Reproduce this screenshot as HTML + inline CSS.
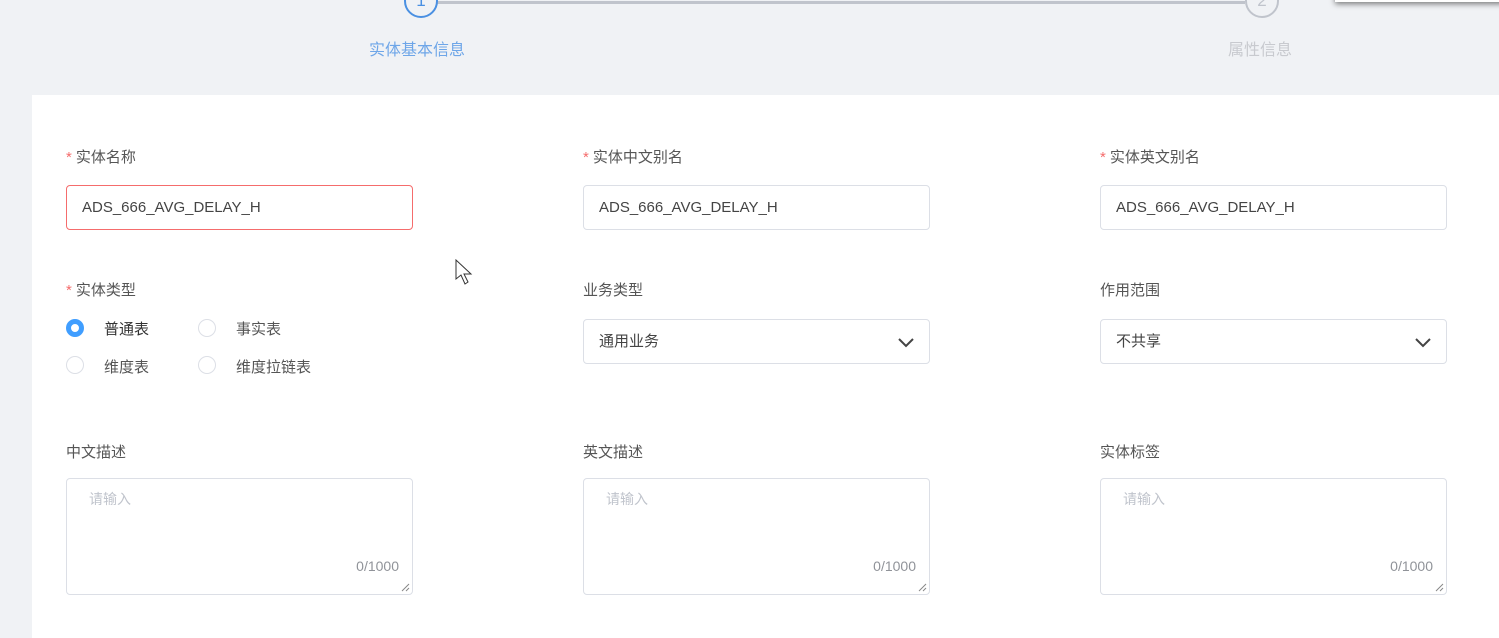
<!DOCTYPE html>
<html><head><meta charset="utf-8"><style>
*{box-sizing:border-box;margin:0;padding:0}
body{width:1499px;height:638px;overflow:hidden;background:#f0f2f5;font-family:"Liberation Sans","Noto Sans CJK SC",sans-serif;position:relative;color:#606266}
.abs{position:absolute}
.card{left:32px;top:95px;width:1467px;height:543px;background:#fff}
.lbl{font-size:15px;color:#555}
.lbl b{color:#f56c6c;font-weight:normal;margin-right:4px}
.inp{height:45px;width:347px;border:1px solid #dcdfe6;border-radius:4px;font-size:15px;color:#444;padding:0 15px;line-height:43px}
.ta{height:117px;width:347px;border:1px solid #dcdfe6;border-radius:4px;font-size:14px}
.ta .ph{position:absolute;left:22px;top:10px;color:#c0c4cc}
.ta .cnt{position:absolute;right:13px;bottom:20px;color:#909399;font-size:14px}
.ta svg{position:absolute;right:2px;bottom:2px}
.radio{width:18px;height:18px;border:1px solid #dcdfe6;border-radius:50%}
.rt{font-size:15px;color:#555}
</style></head><body>
<div class="abs" style="left:437px;top:1px;width:808px;height:3px;background:#c0c4cc"></div>
<div class="abs" style="left:404px;top:-16px;width:34px;height:34px;border:2px solid #4a90e2;border-radius:50%;background:#f0f2f5;color:#4a90e2;text-align:center;line-height:30px;font-size:17px">1</div>
<div class="abs" style="left:1245px;top:-16px;width:34px;height:34px;border:2px solid #c0c4cc;border-radius:50%;background:#f0f2f5;color:#c0c4cc;text-align:center;line-height:30px;font-size:17px">2</div>
<div class="abs" style="left:369px;top:36px;font-size:16px;color:#6ea6e8">实体基本信息</div>
<div class="abs" style="left:1228px;top:36px;font-size:16px;color:#c8cacf">属性信息</div>
<div class="abs" style="left:1335px;top:-10px;width:180px;height:12px;background:#fff;box-shadow:0 2px 6px rgba(0,0,0,.5)"></div>
<div class="abs card"></div>

<div class="abs lbl" style="left:66px;top:146px"><b>*</b>实体名称</div>
<div class="abs lbl" style="left:583px;top:146px"><b>*</b>实体中文别名</div>
<div class="abs lbl" style="left:1100px;top:146px"><b>*</b>实体英文别名</div>
<div class="abs inp" style="left:66px;top:185px;border-color:#f56c6c">ADS_666_AVG_DELAY_H</div>
<div class="abs inp" style="left:583px;top:185px">ADS_666_AVG_DELAY_H</div>
<div class="abs inp" style="left:1100px;top:185px">ADS_666_AVG_DELAY_H</div>

<div class="abs lbl" style="left:66px;top:279px"><b>*</b>实体类型</div>
<div class="abs lbl" style="left:583px;top:279px">业务类型</div>
<div class="abs lbl" style="left:1100px;top:279px">作用范围</div>

<div class="abs radio" style="left:66px;top:319px;border:5px solid #409eff;background:#fff"></div>
<div class="abs rt" style="left:104px;top:318px;color:#333">普通表</div>
<div class="abs radio" style="left:198px;top:319px"></div>
<div class="abs rt" style="left:236px;top:318px">事实表</div>
<div class="abs radio" style="left:66px;top:356px"></div>
<div class="abs rt" style="left:104px;top:356px">维度表</div>
<div class="abs radio" style="left:198px;top:356px"></div>
<div class="abs rt" style="left:236px;top:356px">维度拉链表</div>

<div class="abs inp" style="left:583px;top:319px">通用业务</div>
<div class="abs inp" style="left:1100px;top:319px">不共享</div>
<svg class="abs" style="left:897px;top:336px" width="18" height="12"><path d="M2 3 L9 10 L16 3" fill="none" stroke="#444" stroke-width="2"/></svg>
<svg class="abs" style="left:1414px;top:336px" width="18" height="12"><path d="M2 3 L9 10 L16 3" fill="none" stroke="#444" stroke-width="2"/></svg>

<div class="abs lbl" style="left:66px;top:441px">中文描述</div>
<div class="abs lbl" style="left:583px;top:441px">英文描述</div>
<div class="abs lbl" style="left:1100px;top:441px">实体标签</div>
<div class="abs ta" style="left:66px;top:478px"><span class="ph">请输入</span><span class="cnt">0/1000</span><svg width="10" height="10"><path d="M9 2L2 9M9 6L6 9" stroke="#888"/></svg></div>
<div class="abs ta" style="left:583px;top:478px"><span class="ph">请输入</span><span class="cnt">0/1000</span><svg width="10" height="10"><path d="M9 2L2 9M9 6L6 9" stroke="#888"/></svg></div>
<div class="abs ta" style="left:1100px;top:478px"><span class="ph">请输入</span><span class="cnt">0/1000</span><svg width="10" height="10"><path d="M9 2L2 9M9 6L6 9" stroke="#888"/></svg></div>

<svg class="abs" style="left:455px;top:259px" width="20" height="28"><path d="M1 1 L1 20 L6 16 L10 25 L13 23 L9 15 L16 15 Z" fill="#fff" stroke="#333" stroke-width="1"/></svg>
</body></html>
